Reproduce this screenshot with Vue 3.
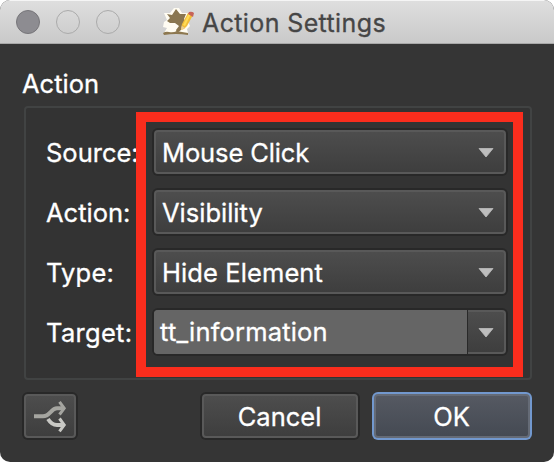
<script setup>
const rows = [
  { label: 'Source:', value: 'Mouse Click', id: 'source' },
  { label: 'Action:', value: 'Visibility', id: 'action' },
  { label: 'Type:', value: 'Hide Element', id: 'type' },
  { label: 'Target:', value: 'tt_information', id: 'target', editable: true },
]
</script>

<template>
  <div class="window">
    <header class="titlebar">
      <div class="lights">
        <span class="light close"></span>
        <span class="light"></span>
        <span class="light"></span>
      </div>
      <svg class="app-icon" width="34" height="28" viewBox="0 0 34 28">
        <path d="M3 5l6 0 4-5h5l3 5 6 0 0 9 2 4-3 3 1 4H3l3-5-4-1 1-5 3-2z" fill="#fffcf2" />
        <path d="M6 6l5 1 4-6 4 5 6 0-2 5 2 4-4 2-1 5-4 3-1-3 3-4-4-3-5 0-3-2 3-3z" fill="#8a7650" />
        <path d="M2 25q3-2 6-1 4 1 8-1l5 1 6 1v2q-12-2-24 0z" fill="#8d7850" />
        <path d="M20 22l1-6 6-11 5 2-6 11-3 3z" fill="#f2bd37" />
        <path d="M22 17l6-12 2 1-6 12z" fill="#ffdc55" />
        <path d="M27 6l1-2q3-1 5 1l-1 4z" fill="#c76458" />
        <path d="M20 22l1-4 3 2z" fill="#e8cd99" />
      </svg>
      <h1 class="title">Action Settings</h1>
    </header>

    <main class="content">
      <h2 class="heading">Action</h2>
      <section class="group">
        <div v-for="row in rows" :key="row.id" class="row">
          <span class="label" :class="row.id">{{ row.label }}</span>
          <div class="combo" :class="{ editable: row.editable }">
            <div class="face">
              <span class="value" :class="'v-' + row.id">{{ row.value }}</span>
              <span class="drop">
                <svg width="16" height="10" viewBox="0 0 16 10"><path d="M1 .5h14L8 9z" fill="#bdbdbd" stroke="#bdbdbd" stroke-width=".8" stroke-linejoin="round" /></svg>
              </span>
            </div>
          </div>
        </div>
        <div class="highlight"></div>
      </section>

      <footer class="buttons">
        <button class="button branch" aria-label="Branch">
          <span class="face">
            <svg width="34" height="34" viewBox="0 0 34 34" fill="none">
              <path d="M1 17.300h9c7 0 8-8 14-8h6" stroke="#a5a5a0" stroke-width="4" />
              <path d="M26.500 2.800L31.200 9.300L26.500 15.500" stroke="#a5a5a0" stroke-width="3" />
              <path d="M15 20c3 5 6 6 9 6h6" stroke="#c8c8c4" stroke-width="3.800" />
              <path d="M26.500 19.500L31.200 26L26.500 32.300" stroke="#c8c8c4" stroke-width="3" />
            </svg>
          </span>
        </button>
        <button class="button cancel"><span class="face">Cancel</span></button>
        <button class="button ok"><span class="face">OK</span></button>
      </footer>
    </main>
  </div>
</template>

<style>
body { background: #fff; }
</style>

<style scoped>
* { box-sizing: border-box; }
.window {
  width: 554px;
  height: 462px;
  overflow: hidden;
  border-radius: 10px;
  background: #353535;
  color: #fff;
  font-family: Inter, "Liberation Sans", sans-serif;
  font-size: 25.5px;
  line-height: 32px;
  -webkit-text-stroke: .3px currentColor;
}
.titlebar {
  display: flex;
  align-items: center;
  height: 44px;
  padding-left: 16px;
  background: linear-gradient(#dedede, #c9c9c9);
  border-top: 1px solid #f5f5f5;
  border-bottom: 1px solid #a8a8a8;
}
.lights { display: flex; gap: 16px; }
.light { width: 24px; height: 24px; border: 1px solid #aaa; border-radius: 50%; }
.close { background: #8d8c91; border-color: #77767a; }
.app-icon { margin-left: 41px; flex: none; }
.title {
  margin: 2px 0 0 7px;
  color: #464646;
  font-size: 25px;
  font-weight: 400;
  letter-spacing: .38px;
  white-space: nowrap;
}
.content { padding: 24px 22px 0; }
.heading { margin: 0; height: 38px; font-size: 25.5px; font-weight: 400; }
.group {
  position: relative;
  display: flex;
  flex-direction: column;
  gap: 12px;
  width: 508px;
  height: 274px;
  margin-left: 2px;
  padding: 20px 0 0 20px;
  border: 2px solid #414343;
  border-radius: 4px;
  background: #333;
}
.row { display: flex; align-items: center; height: 48px; }
.label { width: 106px; flex: none; padding-top: 2px; white-space: nowrap; }
.type { letter-spacing: .2px; }
.target { letter-spacing: .3px; }
.combo {
  width: 356px;
  height: 48px;
  padding: 2px;
  border-radius: 6px;
  background: #282828;
}
.combo .face {
  display: flex;
  align-items: center;
  height: 44px;
  border: 2px solid #595959;
  border-radius: 4px;
  background: linear-gradient(#4d4d4d, #3e3e3e);
}
.value { flex: 1; padding: 2px 0 0 6px; white-space: nowrap; }
.v-source { letter-spacing: -.12px; }
.v-type { letter-spacing: .1px; }
.v-target { letter-spacing: .18px; }
.drop { display: flex; align-items: center; justify-content: center; width: 36px; height: 40px; padding-top: 1px; }
.editable .face { border-left-color: #656565; }
.editable .value {
  align-self: stretch;
  height: 44px;
  margin: -2px 0 -2px -2px;
  padding: 6px 0 0 6px;
  border-right: 1px solid #292929;
  border-radius: 4px 0 0 4px;
  background: #656565;
}
.highlight {
  position: absolute;
  left: 110px;
  top: 4px;
  width: 387px;
  height: 265px;
  border: 10px solid #fa2d1d;
}
.buttons { display: flex; margin-top: 12px; }
.button {
  height: 48px;
  padding: 2px;
  border: 0;
  border-radius: 6px;
  background: #282828;
  color: #fff;
  font: inherit;
}
.button .face {
  display: flex;
  align-items: center;
  justify-content: center;
  height: 44px;
  padding-top: 2px;
  border: 2px solid #595959;
  border-radius: 4px;
  background: linear-gradient(#4d4d4d, #3e3e3e);
}
.branch { width: 56px; }
.branch .face { padding-top: 0; }
.cancel { width: 160px; margin-left: 122px; }
.cancel .face { padding-right: 1px; }
.ok { width: 160px; margin-left: 12px; background: #7298ce; }
.ok .face { padding-right: 1px; border-color: #656b76; background: linear-gradient(#555962, #454a53); }
</style>
